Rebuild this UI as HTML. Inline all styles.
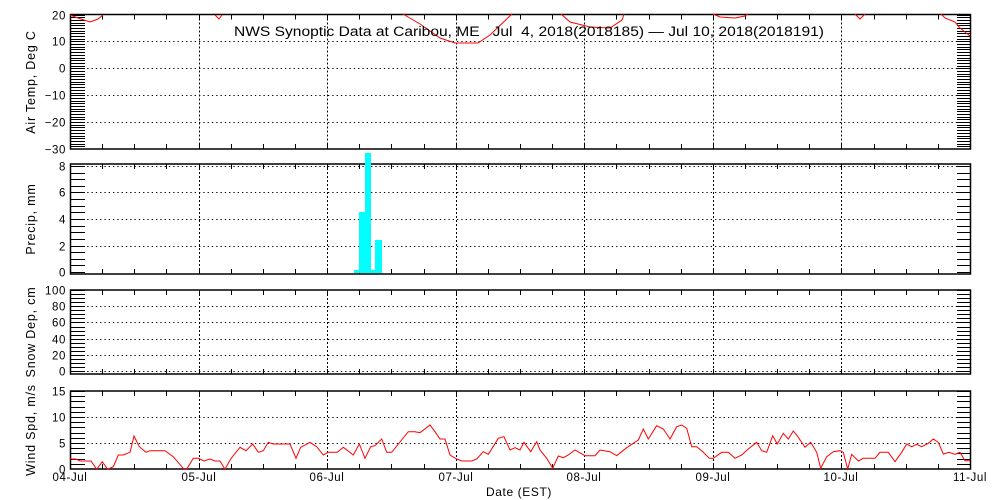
<!DOCTYPE html>
<html><head><meta charset="utf-8"><style>
html,body{margin:0;padding:0;background:#fff;}
svg{display:block;font-family:"Liberation Sans",sans-serif;}
</style></head><body>
<svg id="s" width="1000" height="500" xmlns="http://www.w3.org/2000/svg">
<rect width="1000" height="500" fill="#fff"/>
<g id="g"></g>
<g fill="#000" font-size="12">
<text x="234" y="36" font-size="13.5" style="white-space:pre" textLength="590" lengthAdjust="spacingAndGlyphs">NWS Synoptic Data at Caribou, ME   Jul  4, 2018(2018185) — Jul 10, 2018(2018191)</text>
<text transform="translate(35,82) rotate(-90)" text-anchor="middle" font-size="12.5" letter-spacing="0.8">Air Temp, Deg C</text>
<text transform="translate(35,219) rotate(-90)" text-anchor="middle" font-size="12.5" letter-spacing="0.8">Precip, mm</text>
<text transform="translate(35,332) rotate(-90)" text-anchor="middle" font-size="12.5" letter-spacing="0.8">Snow Dep, cm</text>
<text transform="translate(35,430) rotate(-90)" text-anchor="middle" font-size="12.5" letter-spacing="0.8">Wind Spd, m/s</text>
<text x="519" y="496" text-anchor="middle" letter-spacing="0.6">Date (EST)</text>
</g>
</svg>
<script>
var g=document.getElementById('g');var h='';
function L(x1,y1,x2,y2,a){h+='<line x1="'+x1+'" y1="'+y1+'" x2="'+x2+'" y2="'+y2+'" stroke="#000" '+(a||'stroke-width="1"')+'/>';}
function T(x,y,t,anc){h+='<text x="'+x+'" y="'+y+'" font-size="11.5" letter-spacing="0.6" text-anchor="'+(anc||'end')+'">'+t+'</text>';}
var X0=70,X1=970,dx=(X1-X0)/7;
var P=[{t:14.5,b:149,min:-30,max:20,maj:10,mn:1,lab:[20,10,0,-10,-20,-30]},
{t:164,b:274,min:-0.15,max:8.15,maj:2,mn:0.5,lab:[8,6,4,2,0]},
{t:290,b:374,min:-3.5,max:100,maj:20,mn:5,lab:[100,80,60,40,20,0]},
{t:391,b:469,min:0,max:15,maj:5,mn:1,lab:[15,10,5,0]}];
P.forEach(function(p){
 function Y(v){return p.b-(v-p.min)/(p.max-p.min)*(p.b-p.t);}
 for(var d=1;d<7;d++){var x=Math.round(X0+d*dx)+0.5;L(x,p.t,x,p.b,'stroke-width="1" stroke-dasharray="2,2"');}
 p.lab.forEach(function(v){var y=Math.round(Y(v))+0.5;if(y>p.t+2&&y<p.b-2)L(X0,y,X1,y,'stroke-width="1" stroke-dasharray="1.3,3"');T(66,y+4,String(v).replace('-','\u2212'));});
 for(var v=p.lab[p.lab.length-1];v<=p.max+0.001;v+=p.mn){var y=Math.round(Y(v))+0.5;if(y<p.t||y>p.b)continue;L(X0,y,X0+15,y);L(X1-13,y,X1,y);}
 for(var i=1;i<28;i++){var x=Math.round(X0+i*dx/4)+0.5;L(x,p.t,x,p.t+5);L(x,p.b,x,p.b-5);}
 h+='<rect x="70.5" y="'+p.t+'" width="900" height="'+(p.b-p.t)+'" fill="none" stroke="#000" stroke-width="1.5"/>';
});
var tc=[[[70,15],[78,18],[90,22],[98,19],[103,15]],[[215,15],[219,19],[222,15]],[[403,14],[420,24],[440,38],[455,43],[478,43],[490,35],[512,14]],[[561,14],[570,22],[590,27],[610,28],[622,20],[624,14]],[[713,14],[720,17],[735,18],[745,16],[748,14]],[[855,14],[860,19],[865,14]],[[941,14],[945,18],[955,22],[960,28],[970,36]]];
tc.forEach(function(c){h+='<polyline fill="none" stroke="#f00" stroke-width="1" points="'+c.map(function(p){return p.join(',')}).join(' ')+'"/>';});
h+='<g fill="#00ffff"><rect x="354" y="270" width="5" height="3"/><rect x="359" y="212" width="6" height="61"/><rect x="365" y="153" width="6" height="120"/><rect x="371" y="270" width="4" height="3"/><rect x="375" y="240" width="7" height="33"/></g>';
var wx=[70,76,80,91,96.7,102.3,107.7,113.3,118.3,123.3,130,134,139.3,146,150,165,173.3,184,186.7,193.3,198.3,204,210,215,220,225,230.7,240,246,252.7,258.3,263.3,268.3,273.3,290,296,300.7,310,316.7,323.3,328.3,337.3,343.3,353.3,359.3,365,370.7,375,381.7,386.7,391.7,408.3,415,420,430,435,440,445,450,456.7,461.7,471.7,476.7,483.3,488.3,498.3,504,510,515,520,524,530.7,536.7,540,546.7,552.7,558.3,563.3,568.3,575,585,595,600,610,616.7,626.7,638.3,643.3,648.3,656.7,663.3,670,676.7,681.7,686.7,691.7,696.7,703.3,709.3,713.3,721.7,728.3,735,741.7,748.3,756.7,761.7,766.7,772.7,777.3,783.3,788.3,793.3,798.3,805,810.7,816.7,820.7,826.7,833.3,840,843.3,847.7,851.7,858.3,863.3,875,880,888.3,895,901.7,906.7,911.7,916.7,921.7,928.3,933.3,938.3,943.3,949,955,960,965,970];
var wy=[459,459,461,461,469.3,461.7,469.3,466.7,455,455,452.3,436,446.7,452.3,450.7,450.7,456.7,469.3,469.3,458.3,458.3,461,459,461,461,469.3,459,447.3,450.7,444,452.3,450.7,442.3,444,444,458.3,447.3,442.3,446.7,455,452.3,452.3,447.3,455,444,458.3,446.7,445.7,439,452.3,452.3,431.7,431.7,432.7,425,431.7,439,439,455,459,461,461,459,451.7,454.3,438.3,436.7,450,447.7,450,442.3,451.7,441.7,450,458.3,468.3,456,457.7,455,450,455.7,455.7,450,451.7,455.7,447.7,440,429,439,425.7,429,439,426.7,425,428.3,446.7,446.7,452.3,458.3,458.3,452.3,452.3,458.3,455,449,442.3,450.7,452.3,435.7,444,433.3,439,431,437.3,447.3,442.3,452.3,468.3,456.7,451.7,450.7,452.3,469,454.3,461,458.3,458.3,452.3,452.3,461.7,452.3,444,446.7,444.3,446.7,443.3,439,442.3,454,452.3,454.3,452.3,460.7,460.7];
var pts=[];for(var i=0;i<wx.length&&i<wy.length;i++)pts.push(wx[i]+','+wy[i]);
h+='<polyline fill="none" stroke="#f00" stroke-width="1" points="'+pts.join(' ')+'"/>';
var dl=['04-Jul','05-Jul','06-Jul','07-Jul','08-Jul','09-Jul','10-Jul','11-Jul'];
dl.forEach(function(t,i){T(Math.round(X0+i*dx),481,t,'middle');});
g.innerHTML=h;
</script>
</body></html>
